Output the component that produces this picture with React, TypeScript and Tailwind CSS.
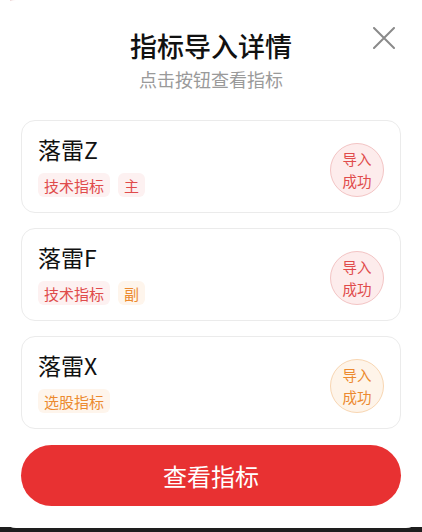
type Tone = "red" | "orange";

type Tag = { label: string; tone: Tone };

type Item = { name: string; tags: Tag[]; tone: Tone };

const items: Item[] = [
  {
    name: "落雷Z",
    tags: [
      { label: "技术指标", tone: "red" },
      { label: "主", tone: "red" },
    ],
    tone: "red",
  },
  {
    name: "落雷F",
    tags: [
      { label: "技术指标", tone: "red" },
      { label: "副", tone: "orange" },
    ],
    tone: "red",
  },
  {
    name: "落雷X",
    tags: [{ label: "选股指标", tone: "orange" }],
    tone: "orange",
  },
];

const tagStyle: Record<Tone, string> = {
  red: "bg-[#fdf1f1] text-[#e04b4b]",
  orange: "bg-[#fef5ec] text-[#ec8a2f]",
};

const badgeStyle: Record<Tone, string> = {
  red: "bg-[#fdecec] border-[#f3c4c4] text-[#e04b4b]",
  orange: "bg-[#fef4e9] border-[#f8d6b2] text-[#ec8a2f]",
};

const IndicatorCard = ({ item }: { item: Item }) => {
  return (
    <div className="flex items-center justify-between rounded-[14px] border border-[#ebebeb] bg-white pl-4 pr-4 pt-[14px] pb-[15px]">
      <div className="flex flex-col">
        <div className="text-[23px] leading-[28px] text-[#111]">{item.name}</div>
        <div className="mt-[10px] flex gap-2">
          {item.tags.map((tag) => (
            <span
              key={tag.label}
              className={`flex h-6 items-center rounded-[6px] px-[6px] text-[15px] leading-none ${tagStyle[tag.tone]}`}
            >
              {tag.label}
            </span>
          ))}
        </div>
      </div>
      <div
        className={`mt-2 flex h-[54px] w-[54px] flex-col items-center justify-center rounded-full border text-[14.5px] leading-[22px] ${badgeStyle[item.tone]}`}
      >
        <span>导入</span>
        <span>成功</span>
      </div>
    </div>
  );
};

export default function App() {
  return (
    <div
      className="relative h-[532px] w-[422px] overflow-hidden bg-white"
      style={{ fontFamily: '"Noto Sans CJK SC", "Noto Sans", sans-serif' }}
    >
      <div className="absolute left-[10px] right-[20px] top-0 h-[2px] bg-gradient-to-r from-[#e9c9c9] via-[#d9b3b3] to-[#eadcd6] opacity-70" />
      <div className="absolute bottom-0 left-0 right-0 h-[5px] bg-[#1e1e1e]" />
      <div className="relative flex h-[528px] flex-col rounded-[16px] bg-white px-[21px]">
        <button className="absolute right-[27px] top-[27px]">
          <svg width="22" height="22" viewBox="0 0 22 22" fill="none" stroke="#8a8a8a" strokeWidth="2" strokeLinecap="round">
            <path d="M1 1 L21 21 M21 1 L1 21" />
          </svg>
        </button>
        <div className="mt-[29px] flex flex-col items-center">
          <h1 className="text-[27px] font-medium leading-[34px] text-[#111]">指标导入详情</h1>
          <p className="mt-1 text-[18px] leading-[24px] text-[#9a9a9a]">点击按钮查看指标</p>
        </div>
        <div className="mt-[29px] flex flex-col gap-[15px]">
          {items.map((item) => (
            <IndicatorCard key={item.name} item={item} />
          ))}
        </div>
        <button className="mt-4 h-[61px] w-full rounded-full bg-[#e83132] text-[24px] text-white">
          查看指标
        </button>
      </div>
    </div>
  );
}
